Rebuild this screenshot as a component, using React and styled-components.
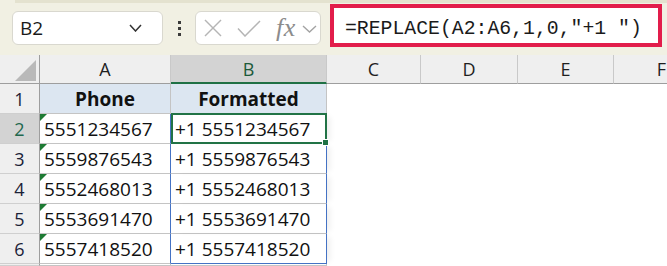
import React from 'react';
import styled, { createGlobalStyle, css } from 'styled-components';

const GlobalStyle = createGlobalStyle`
  html, body { margin: 0; padding: 0; background: #fff; }
  body { font-family: "Open Sans", "Liberation Sans", sans-serif; overflow: hidden; }
`;

const Frame = styled.div`
  width: 667px;
  height: 266px;
  display: flex;
  flex-direction: column;
  overflow: hidden;
`;

const Toolbar = styled.div`
  flex: none;
  height: 55px;
  box-sizing: border-box;
  display: flex;
  align-items: flex-start;
  background: linear-gradient(#e4e2cf, #e4e2cf) 15px 0 / 100% 3px no-repeat, #f1f0e3;
`;

const NameBox = styled.div`
  box-sizing: border-box;
  width: 151px;
  height: 34px;
  margin: 11px 0 0 12px;
  background: #fff;
  border: 1px solid #d9d8cf;
  border-radius: 6px;
  display: flex;
  align-items: center;
  justify-content: space-between;
  padding: 0 20px 0 7px;
  font-size: 19px;
  color: #1a1a1a;
`;

const Dots = styled.div`
  margin: 21px 0 0 15px;
  display: flex;
  flex-direction: column;
  gap: 3px;
`;

const Dot = styled.span`
  display: block;
  width: 3px;
  height: 3px;
  background: #3a3a3a;
`;

const FxBox = styled.div`
  box-sizing: border-box;
  width: 126px;
  height: 34px;
  margin: 11px 0 0 14px;
  background: #fff;
  border: 1px solid #d9d8cf;
  border-radius: 6px;
  display: flex;
  align-items: center;
  padding-left: 8px;
`;

const IconSlot = styled.span`
  display: flex;
  align-items: center;
  margin-left: ${p => p.$ml || 0}px;
  margin-top: ${p => p.$mt || 0}px;
`;

const FxText = styled.span`
  font-family: "Liberation Serif", "DejaVu Serif", serif;
  font-style: italic;
  font-size: 26px;
  line-height: 26px;
  color: #8c8c8c;
  margin-left: 15px;
  margin-top: -1px;
  letter-spacing: 0.5px;
`;

const FormulaBox = styled.div`
  box-sizing: border-box;
  width: 332px;
  height: 43px;
  margin: 4px 0 0 9px;
  border: 4px solid #e21d4b;
  background: #fff;
  font-family: "Liberation Mono", "DejaVu Sans Mono", monospace;
  font-size: 19.8px;
  line-height: 27px;
  padding: 8px 0 0 11px;
  color: #1a1a1a;
  white-space: nowrap;
`;

const Sheet = styled.div`
  flex: 1;
  width: 710px;
  display: grid;
  grid-template-columns: 40px 131px 156px 94px 97px 96px 96px;
  grid-template-rows: 29px repeat(6, 30px) 1fr;
  background: #fff;
`;

const Corner = styled.div`
  box-sizing: border-box;
  background: #efefef;
  border-right: 1px solid #9e9e9e;
  border-bottom: 1px solid #9e9e9e;
  display: flex;
  justify-content: flex-end;
  align-items: flex-end;
  padding: 0 3px 2px 0;
`;

const CornerTriangle = styled.div`
  width: 21px;
  height: 21px;
  background: #b9b9b9;
  clip-path: polygon(100% 0, 100% 100%, 0 100%);
`;

const ColHeader = styled.div`
  box-sizing: border-box;
  display: flex;
  align-items: center;
  justify-content: center;
  background: ${p => (p.$selected ? '#d3d3d3' : '#efefef')};
  border-right: 1px solid #c9c9c9;
  border-bottom: ${p => (p.$selected ? '2px solid #1f7145' : '1px solid #9e9e9e')};
  color: ${p => (p.$selected ? '#1d5a3a' : '#1f1f1f')};
  font-size: 18px;
  padding-top: ${p => (p.$selected ? 1 : 0)}px;
`;

const RowHeader = styled.div`
  box-sizing: border-box;
  display: flex;
  align-items: center;
  justify-content: center;
  background: ${p => (p.$selected ? '#d3d3d3' : '#efefef')};
  border-right: 1px solid #9e9e9e;
  border-bottom: 1px solid #cfcfcf;
  color: ${p => (p.$selected ? '#22684e' : '#1b2238')};
  font-size: 18px;
  padding-top: 1px;
`;

const Cell = styled.div`
  box-sizing: border-box;
  position: relative;
  font-size: 19px;
  line-height: 29px;
  padding: 1px 4px 0;
  white-space: nowrap;
  color: #111;
  background: ${p => (p.$head ? '#dce6f1' : 'transparent')};
  font-weight: ${p => (p.$head ? 700 : 400)};
  text-align: ${p => (p.$head ? 'center' : 'left')};
  border-right: 1px solid ${p => (p.$blueRight ? '#4472c4' : '#c4c4c4')};
  border-bottom: 1px solid ${p => (p.$blueBottom ? '#4472c4' : '#c4c4c4')};
  ${p => p.$shadow && css`box-shadow: 6px 0 6px -3px rgba(0, 0, 0, 0.07);`}
  ${p =>
    p.$flag &&
    css`
      &::before {
        content: '';
        position: absolute;
        left: 0;
        top: 0;
        border-top: 7px solid #1e7b34;
        border-right: 7px solid transparent;
      }
    `}
`;

const EmptyCell = styled.div`
  background: transparent;
`;

const Selection = styled.div`
  position: absolute;
  left: 0;
  top: -1px;
  right: -1px;
  bottom: -1px;
  border: 2px solid #217346;
  z-index: 2;
  pointer-events: none;
`;

const FillHandle = styled.div`
  position: absolute;
  right: -4px;
  bottom: -4px;
  width: 5px;
  height: 5px;
  background: #217346;
  border: 1px solid #fff;
`;

const ChevronDown = ({ w = 14, h = 8, color = '#333', sw = 1.6 }) => (
  <svg width={w} height={h} viewBox={`0 0 ${w} ${h}`} fill="none">
    <polyline points={`1,1 ${w / 2},${h - 1} ${w - 1},1`} stroke={color} strokeWidth={sw} />
  </svg>
);

const XIcon = () => (
  <svg width="18" height="18" viewBox="0 0 18 18" fill="none">
    <line x1="1" y1="1" x2="17" y2="17" stroke="#b5b5b5" strokeWidth="1.5" />
    <line x1="17" y1="1" x2="1" y2="17" stroke="#b5b5b5" strokeWidth="1.5" />
  </svg>
);

const CheckIcon = () => (
  <svg width="24" height="17" viewBox="0 0 24 17" fill="none">
    <polyline points="1,8.5 8,16 23,1" stroke="#b5b5b5" strokeWidth="1.5" />
  </svg>
);

const columns = ['A', 'B', 'C', 'D', 'E', 'F'];
const data = [
  ['5551234567', '+1 5551234567'],
  ['5559876543', '+1 5559876543'],
  ['5552468013', '+1 5552468013'],
  ['5553691470', '+1 5553691470'],
  ['5557418520', '+1 5557418520'],
];

const Empties = ({ row }) =>
  ['C', 'D', 'E', 'F'].map(c => <EmptyCell key={c + row} />);

export default function App() {
  return (
    <Frame>
      <GlobalStyle />
      <Toolbar>
        <NameBox>
          <span>B2</span>
          <ChevronDown w={13} h={8} color="#333" sw={1.5} />
        </NameBox>
        <Dots>
          <Dot />
          <Dot />
          <Dot />
        </Dots>
        <FxBox>
          <IconSlot $ml={0} $mt={-1}>
            <XIcon />
          </IconSlot>
          <IconSlot $ml={15} $mt={0}>
            <CheckIcon />
          </IconSlot>
          <FxText>fx</FxText>
          <IconSlot $ml={6} $mt={1}>
            <ChevronDown w={15} h={8} color="#a3a3a3" sw={1.4} />
          </IconSlot>
        </FxBox>
        <FormulaBox>=REPLACE(A2:A6,1,0,"+1 ")</FormulaBox>
      </Toolbar>
      <Sheet>
        <Corner>
          <CornerTriangle />
        </Corner>
        {columns.map(c => (
          <ColHeader key={c} $selected={c === 'B'}>
            {c}
          </ColHeader>
        ))}

        <RowHeader>1</RowHeader>
        <Cell $head>Phone</Cell>
        <Cell $head>Formatted</Cell>
        <Empties row={1} />

        {data.map(([a, b], i) => (
          <React.Fragment key={a}>
            <RowHeader $selected={i === 0}>{i + 2}</RowHeader>
            <Cell $flag $blueRight>
              {a}
            </Cell>
            <Cell $blueRight $blueBottom={i === data.length - 1} $shadow>
              {b}
              {i === 0 && (
                <Selection>
                  <FillHandle />
                </Selection>
              )}
            </Cell>
            <Empties row={i + 2} />
          </React.Fragment>
        ))}

        <RowHeader />
        <Cell />
        <Cell />
        <Empties row={7} />
      </Sheet>
    </Frame>
  );
}
